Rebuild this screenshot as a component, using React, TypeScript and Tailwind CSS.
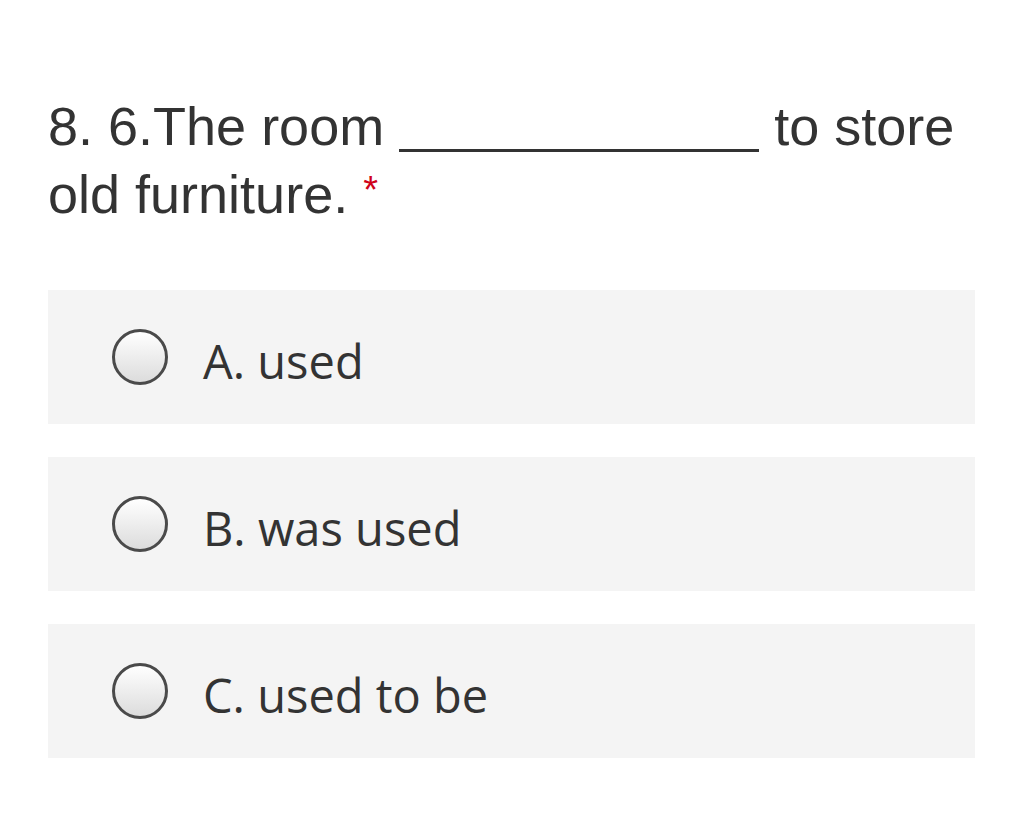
export default function App() {
  const options = ["A. used", "B. was used", "C. used to be"];

  return (
    <div className="min-h-[830px] w-full bg-white px-12 pt-[92px]">
      {/* Question */}
      <h2
        className="text-[54px] leading-[68px] text-[#333333] font-normal"
        style={{ fontFamily: '"Liberation Sans", Arial, sans-serif' }}
      >
        8. 6.The room{" "}
        <span className="inline-block w-[360px] border-b-[3px] border-[#333333] align-baseline translate-y-[7px]"></span>{" "}
        to store old furniture.{" "}
        <span className="inline-block leading-none text-[38px] text-[#d0021b] -translate-y-[10px]">*</span>
      </h2>

      {/* Options */}
      <div className="mt-[62px] flex flex-col gap-[33px] w-[927px]">
        {options.map((opt) => (
          <label
            key={opt}
            className="flex h-[134px] items-center bg-[#f4f4f4] pl-[64px]"
          >
            <span className="h-[56px] w-[56px] shrink-0 rounded-full border-[3px] border-[#4a4a4a] bg-gradient-to-b from-white to-[#dcdcdc]"></span>
            <span
              className="ml-[35px] pt-[8px] text-[47px] text-[#333333]"
              style={{ fontFamily: '"Open Sans", "Noto Sans", sans-serif' }}
            >
              {opt}
            </span>
          </label>
        ))}
      </div>
    </div>
  );
}
